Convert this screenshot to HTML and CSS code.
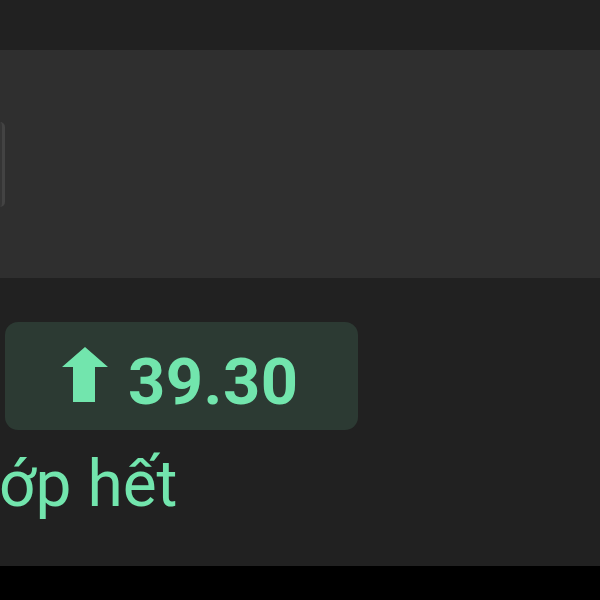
FILE: index.html
```html
<!DOCTYPE html>
<html>

<head>
  <title>Biến động</title>
  <link rel="stylesheet" href="styles.css">
</head>

<body>
  <div class="screen">
    <div class="topbar"></div>
    <div class="panel">
      <div class="card-edge"></div>
    </div>
    <div class="main">
      <div class="badge">
        <svg class="arrow" width="46" height="55" viewBox="0 0 46 55">
          <polygon points="23,0 46,20 33,20 33,55 11,55 11,20 0,20" />
        </svg>
        <span class="value">39.30</span>
      </div>
      <div class="caption">ớp hết</div>
    </div>
    <div class="bottombar"></div>
  </div>
</body>

</html>
```

FILE: styles.css
```css
html,
body {
  margin: 0;
  padding: 0;
  background: #000;
}

.screen {
  width: 600px;
  height: 600px;
  display: flex;
  flex-direction: column;
  font-family: Roboto, "Noto Sans", sans-serif;
  overflow: hidden;
}

.topbar {
  height: 50px;
  background: #212121;
}

.panel {
  height: 228px;
  background: #2f2f2f;
  padding-top: 72px;
  box-sizing: border-box;
}

.card-edge {
  width: 2px;
  height: 85px;
  border-right: 3px solid #434343;
  border-radius: 0 9px 9px 0;
  background: #353535;
}

.main {
  height: 288px;
  background: #212121;
  padding: 44px 0 0 5px;
  box-sizing: border-box;
}

.badge {
  width: 353px;
  height: 108px;
  border-radius: 13px;
  background: #2c3a33;
  display: flex;
  align-items: center;
  box-sizing: border-box;
  padding-left: 57px;
}

.arrow {
  fill: #72e5ad;
  margin-top: -4px;
}

.value {
  margin: 12px 0 0 20px;
  font-size: 65px;
  font-weight: 700;
  color: #72e5ad;
  letter-spacing: 0.5px;
}

.caption {
  margin-left: -6px;
  margin-top: 17px;
  font-size: 64px;
  line-height: 76px;
  color: #72e5ad;
  white-space: nowrap;
}

.bottombar {
  flex: 1;
  background: #000;
}
```
